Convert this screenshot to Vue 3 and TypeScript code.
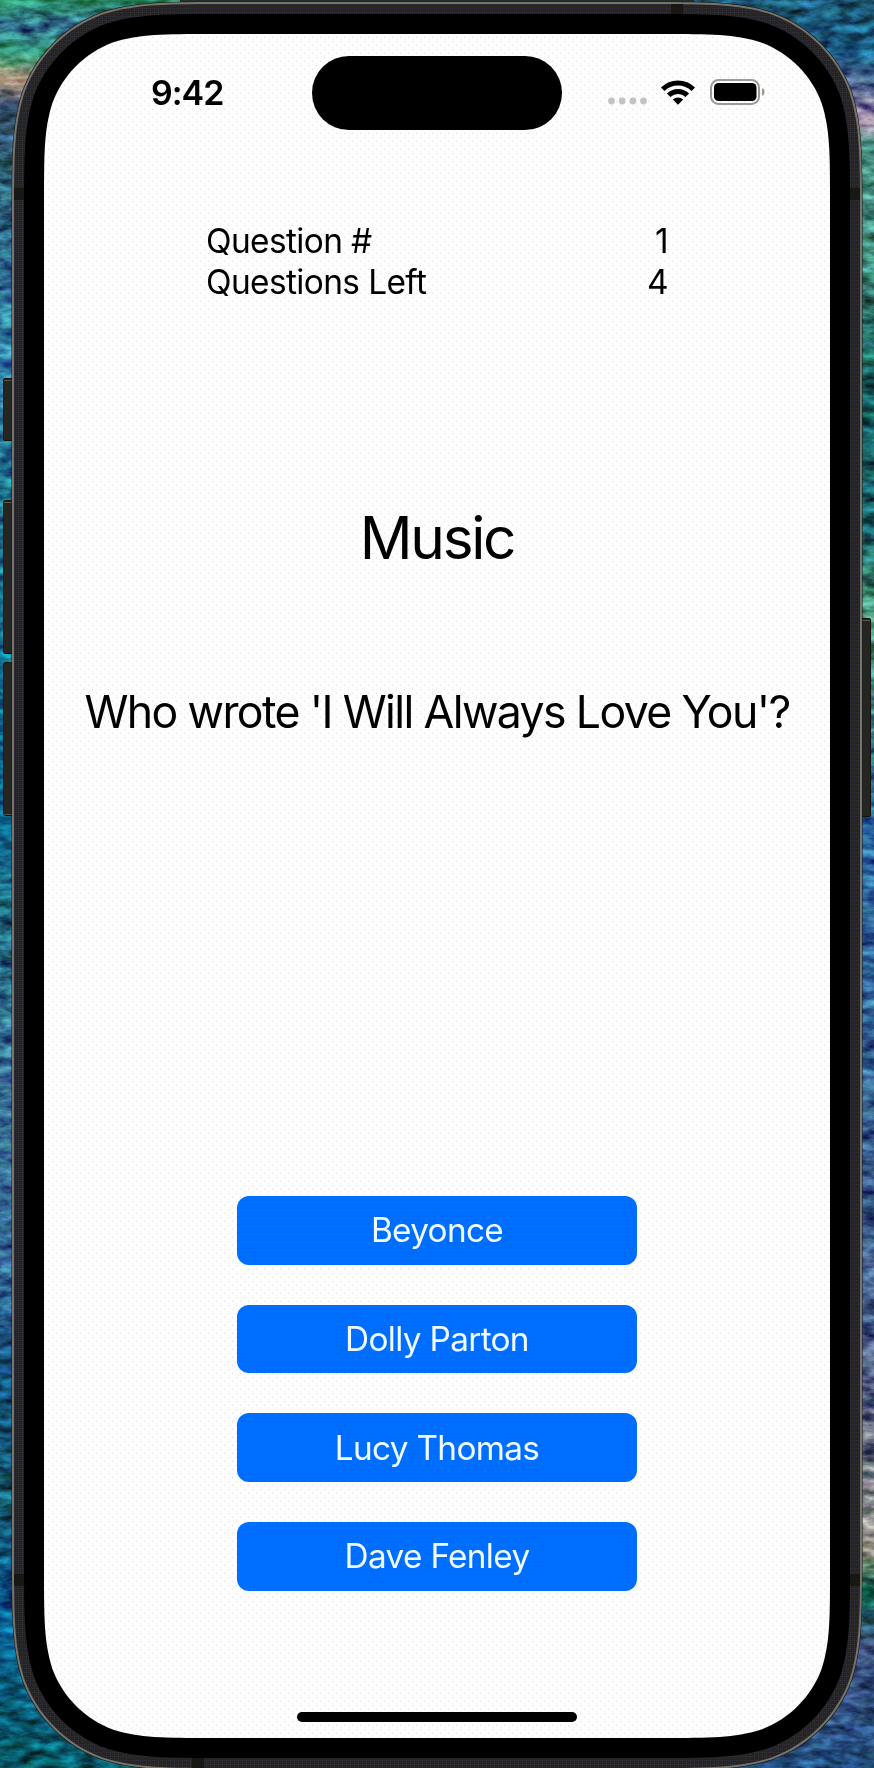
<script setup lang="ts">
import { ref } from 'vue'

interface Stat {
  label: string
  value: number
}

const stats = ref<Stat[]>([
  { label: 'Question #', value: 1 },
  { label: 'Questions Left', value: 4 },
])

const category = 'Music'
const question = "Who wrote 'I Will Always Love You'?"
const answers: string[] = ['Beyonce', 'Dolly Parton', 'Lucy Thomas', 'Dave Fenley']

// Rounded rectangle with continuous-curvature corners.
function squircle(x: number, y: number, w: number, h: number, r: number): string {
  const a = 1.528665 * r
  const b = 1.088493 * r
  const c = 0.868407 * r
  const d = 0.631494 * r
  const e = 0.372824 * r
  const f = 0.16906 * r
  const g = 0.074911 * r
  const X = x + w
  const Y = y + h
  return [
    `M${x + a} ${y}H${X - a}`,
    `C${X - b} ${y} ${X - c} ${y} ${X - d} ${y + g}`,
    `C${X - e} ${y + f} ${X - f} ${y + e} ${X - g} ${y + d}`,
    `C${X} ${y + c} ${X} ${y + b} ${X} ${y + a}V${Y - a}`,
    `C${X} ${Y - b} ${X} ${Y - c} ${X - g} ${Y - d}`,
    `C${X - f} ${Y - e} ${X - e} ${Y - f} ${X - d} ${Y - g}`,
    `C${X - c} ${Y} ${X - b} ${Y} ${X - a} ${Y}H${x + a}`,
    `C${x + b} ${Y} ${x + c} ${Y} ${x + d} ${Y - g}`,
    `C${x + e} ${Y - f} ${x + f} ${Y - e} ${x + g} ${Y - d}`,
    `C${x} ${Y - c} ${x} ${Y - b} ${x} ${Y - a}V${y + a}`,
    `C${x} ${y + b} ${x} ${y + c} ${x + g} ${y + d}`,
    `C${x + f} ${y + e} ${x + e} ${y + f} ${x + d} ${y + g}`,
    `C${x + c} ${y} ${x + b} ${y} ${x + a} ${y}Z`,
  ].join('')
}

const edge = squircle(11.5, 1.5, 851, 1769, 142)
const rim = squircle(12, 2, 850, 1768, 142)
const frame = squircle(14, 4, 846, 1764, 140)
const bezel = squircle(24, 14, 826, 1744, 130)
const glass = squircle(44, 34, 786, 1704, 110)
</script>

<template>
  <main class="stage">
    <svg class="device" width="874" height="1768" viewBox="0 0 874 1768" aria-hidden="true">
      <defs>
        <linearGradient id="seaLeft" x1="0" y1="0" x2="0" y2="1">
          <stop offset="0" stop-color="#2c9a78" />
          <stop offset=".015" stop-color="#35789a" />
          <stop offset=".03" stop-color="#37a689" />
          <stop offset=".045" stop-color="#b59a86" />
          <stop offset=".054" stop-color="#76808a" />
          <stop offset=".06" stop-color="#344f78" />
          <stop offset=".1" stop-color="#2f6b86" />
          <stop offset=".21" stop-color="#3288b4" />
          <stop offset=".28" stop-color="#1e7f98" />
          <stop offset=".38" stop-color="#0d7198" />
          <stop offset=".46" stop-color="#07709c" />
          <stop offset=".52" stop-color="#22788e" />
          <stop offset=".6" stop-color="#3a78a0" />
          <stop offset=".72" stop-color="#34709f" />
          <stop offset=".78" stop-color="#125488" />
          <stop offset=".85" stop-color="#176580" />
          <stop offset=".91" stop-color="#0a65a0" />
          <stop offset="1" stop-color="#086271" />
        </linearGradient>
        <linearGradient id="seaRight" x1="0" y1="0" x2="0" y2="1">
          <stop offset="0" stop-color="#1d5e80" />
          <stop offset=".03" stop-color="#1a6592" />
          <stop offset=".055" stop-color="#6c749e" />
          <stop offset=".07" stop-color="#b094b4" />
          <stop offset=".08" stop-color="#4d9a91" />
          <stop offset=".14" stop-color="#3f8a80" />
          <stop offset=".22" stop-color="#176a6c" />
          <stop offset=".3" stop-color="#1b7078" />
          <stop offset=".35" stop-color="#48927a" />
          <stop offset=".47" stop-color="#2c72ac" />
          <stop offset=".6" stop-color="#356a9c" />
          <stop offset=".75" stop-color="#4b6698" />
          <stop offset=".88" stop-color="#9d9d92" />
          <stop offset=".9" stop-color="#08705f" />
          <stop offset=".93" stop-color="#42588c" />
          <stop offset="1" stop-color="#23558d" />
        </linearGradient>
        <filter id="brush" x="0" y="0" width="100%" height="100%" color-interpolation-filters="sRGB">
          <feTurbulence type="fractalNoise" baseFrequency=".05 .12" numOctaves="4" seed="8" />
          <feColorMatrix values="1.3 .3 0 0 -.34  1.1 .5 0 0 -.36  1.1 .3 .2 0 -.38  0 0 0 0 1" />
        </filter>
        <pattern id="metal" width="4" height="4" patternUnits="userSpaceOnUse">
          <rect width="4" height="4" fill="#252422" />
          <path d="M0 0h1v1H0zM2 2h1v1H2z" fill="#33332b" />
          <path d="M2 0h1v1H2z" fill="#333350" />
        </pattern>
        <pattern id="pixels" width="8" height="8" patternUnits="userSpaceOnUse">
          <rect width="8" height="8" fill="#fdfdfd" />
          <path d="M1 3h1v1H1zM5 7h1v1H5z" fill="#ffffa8" />
          <path d="M4 1h1v1H4zM0 5h1v1H0z" fill="#d8d8fc" />
        </pattern>
      </defs>

      <rect width="437" height="1768" fill="url(#seaLeft)" />
      <rect x="437" width="437" height="1768" fill="url(#seaRight)" />
      <rect class="paint" width="874" height="1768" filter="url(#brush)" />
      <rect x="180" width="514" height="2" fill="#24302c" />

      <g fill="#252522" stroke="#11120f">
        <rect x="3.5" y="378.5" width="12" height="62" rx="1.5" />
        <rect x="3.5" y="500.5" width="12" height="153" rx="2" />
        <rect x="3.5" y="662.5" width="12" height="153" rx="2" />
        <rect x="858.5" y="618.5" width="12" height="198" rx="1.5" />
      </g>
      <path d="M4 380.5h8M4 502.500h8M4 814.500h8M862 620.500h8" stroke="#57564e" />

      <path :d="edge" fill="#161815" />
      <path :d="rim" fill="#78746c" />
      <path :d="frame" fill="url(#metal)" />
      <g fill="#171714">
        <rect x="14" y="188" width="10" height="12" />
        <rect x="850" y="188" width="10" height="12" />
        <rect x="14" y="1574" width="10" height="12" />
        <rect x="850" y="1574" width="10" height="12" />
        <rect x="671" y="4" width="12" height="10" />
        <rect x="192" y="1758" width="12" height="10" />
      </g>
      <path :d="bezel" fill="#000" />
      <path :d="glass" fill="url(#pixels)" />
    </svg>

    <div class="screen">
      <header class="status">
        <time class="clock">9:42</time>
        <div class="island"></div>
        <div class="indicators">
          <svg width="36" height="8" viewBox="0 0 36 8" class="cell">
            <g fill="#c3c3c6">
              <circle cx="3.500" cy="4" r="3.400" />
              <circle cx="14.200" cy="4" r="3.400" />
              <circle cx="24.900" cy="4" r="3.400" />
              <circle cx="35.500" cy="4" r="3.400" />
            </g>
          </svg>
          <svg width="34" height="25" viewBox="0 0 34 25" class="wifi">
            <g fill="none" stroke="#000" stroke-width="5">
              <path d="M1.700 9.200a21.800 21.800 0 0 1 30.600 0" />
              <path d="M7.700 15.300a13.300 13.300 0 0 1 18.600 0" />
            </g>
            <path d="M17 24.800 11.800 19.600a7.400 7.400 0 0 1 10.400 0z" />
          </svg>
          <svg width="56" height="26" viewBox="0 0 56 26" class="battery">
            <rect x="1" y="1" width="48" height="24" rx="7.500" fill="none" stroke="#9b9b96" stroke-width="2" />
            <rect x="4" y="4" width="42.500" height="18" rx="4.500" />
            <path d="M52 9c3.400 1.200 3.400 6.800 0 8z" fill="#9b9b96" />
          </svg>
        </div>
      </header>

      <dl class="stats">
        <div v-for="s in stats" :key="s.label" class="stat">
          <dt>{{ s.label }}</dt>
          <dd>{{ s.value }}</dd>
        </div>
      </dl>

      <h1 class="category">{{ category }}</h1>
      <p class="question">{{ question }}</p>

      <div class="answers">
        <button v-for="a in answers" :key="a" type="button" class="answer">{{ a }}</button>
      </div>

      <div class="home"></div>
    </div>
  </main>
</template>

<style>
body {
  margin: 0;
}
</style>

<style scoped>
.stage {
  position: relative;
  box-sizing: border-box;
  width: 874px;
  height: 1768px;
  padding: 34px 44px 30px;
  overflow: hidden;
  background: #176a90;
  font-family: Inter, "Liberation Sans", sans-serif;
  color: #000;
}
.device {
  position: absolute;
  inset: 0;
}
.paint {
  mix-blend-mode: overlay;
  opacity: 0.8;
}
.screen {
  position: relative;
  display: flex;
  flex-direction: column;
  align-items: center;
  width: 786px;
  height: 1704px;
}
.status {
  display: grid;
  grid-template-columns: 268px 250px 268px;
  width: 100%;
  height: 74px;
  margin-top: 22px;
  flex: none;
}
.clock {
  padding: 15px 0 0 107px;
  font-size: 34px;
  line-height: 44px;
  font-weight: 600;
  letter-spacing: -1px;
}
.island {
  height: 74px;
  border-radius: 37px;
  background: #000;
}
.indicators {
  display: flex;
  align-items: flex-start;
  padding-left: 46px;
}
.indicators svg {
  flex: none;
  overflow: visible;
}
.cell {
  margin-top: 41px;
}
.wifi {
  margin: 24px 0 0 17px;
}
.battery {
  margin: 23px 0 0 15px;
}
.stats {
  width: 462px;
  margin: 91px 0 0;
  font-size: 33.400px;
  line-height: 40.600px;
  letter-spacing: -0.6px;
}
.stat {
  display: flex;
  justify-content: space-between;
}
.stat dt,
.stat dd {
  margin: 0;
}
.category {
  margin: 200px 0 0;
  font-size: 58.500px;
  line-height: 72px;
  font-weight: 400;
  letter-spacing: -2.300px;
}
.question {
  margin: 110px 0 0;
  font-size: 44.600px;
  line-height: 56px;
  letter-spacing: -1.620px;
  white-space: nowrap;
}
.answers {
  display: flex;
  flex-direction: column;
  gap: 40px;
  margin-top: 455.800px;
}
.answer {
  width: 400px;
  height: 68.700px;
  padding: 0;
  border: 0;
  border-radius: 12px;
  background: conic-gradient(at 1px 1px, transparent 270deg, #0a60d4 0) 0 0 / 4px 4px #006eff;
  color: #f0fbff;
  font: inherit;
  font-size: 33.300px;
  letter-spacing: -0.65px;
}
.home {
  width: 280px;
  height: 10px;
  margin: auto 0 16px;
  border-radius: 5px;
  background: #000;
}
</style>
